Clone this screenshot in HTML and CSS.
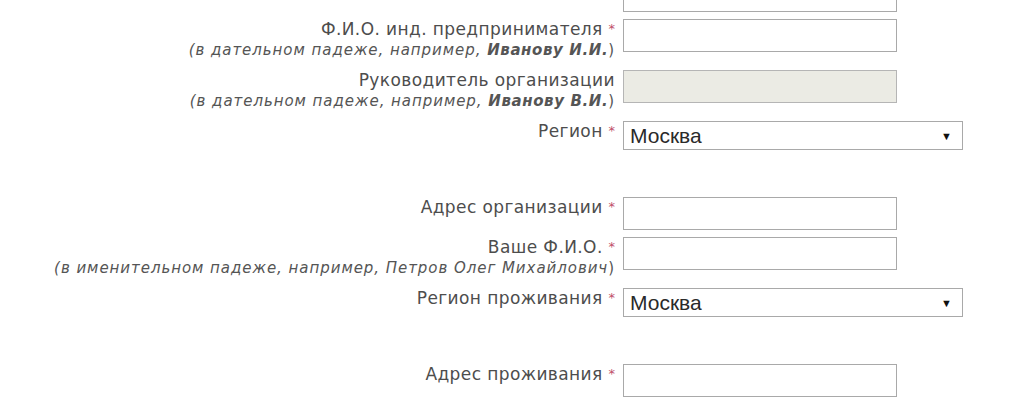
FILE: index.html
```html
<!DOCTYPE html>
<html lang="ru">
<head>
    <meta charset="UTF-8">
    <title>Анкета</title>
    <link rel="stylesheet" href="styles.css">
</head>
<body>
    <form class="form">
        <div class="row">
            <div class="label-col">
                <label>Наименование организации <span class="req">*</span></label>
            </div>
            <input type="text" class="field">
        </div>
        <div class="row">
            <div class="label-col">
                <label>Ф.И.О. инд. предпринимателя <span class="req">*</span></label>
                <div class="hint"><i>(в дательном падеже, например, <b>Иванову И.И.</b></i>)</div>
            </div>
            <input type="text" class="field">
        </div>
        <div class="row">
            <div class="label-col">
                <label>Руководитель организации</label>
                <div class="hint"><i>(в дательном падеже, например, <b>Иванову В.И.</b></i>)</div>
            </div>
            <input type="text" class="field" disabled>
        </div>
        <div class="row">
            <div class="label-col">
                <label>Регион <span class="req">*</span></label>
            </div>
            <div class="select">
                <span>Москва</span>
                <span class="arrow">&#9660;</span>
            </div>
        </div>
        <div class="spacer"></div>
        <div class="row">
            <div class="label-col">
                <label>Адрес организации <span class="req">*</span></label>
            </div>
            <input type="text" class="field">
        </div>
        <div class="row">
            <div class="label-col">
                <label>Ваше Ф.И.О. <span class="req">*</span></label>
                <div class="hint"><i>(в именительном падеже, например, Петров Олег Михайлович</i>)</div>
            </div>
            <input type="text" class="field">
        </div>
        <div class="row">
            <div class="label-col">
                <label>Регион проживания <span class="req">*</span></label>
            </div>
            <div class="select">
                <span>Москва</span>
                <span class="arrow">&#9660;</span>
            </div>
        </div>
        <div class="spacer"></div>
        <div class="row">
            <div class="label-col">
                <label>Адрес проживания <span class="req">*</span></label>
            </div>
            <input type="text" class="field">
        </div>
    </form>
</body>
</html>
```

FILE: styles.css
```css
body {
    margin: 0;
    padding: 0;
    background-color: #ffffff;
    font-family: 'DejaVu Sans', Verdana, sans-serif;
    color: #444444;
    overflow: hidden;
}

.form {
    margin-top: -21px;
}

.row {
    display: grid;
    grid-template-columns: 615px auto;
    column-gap: 8px;
    align-items: start;
    margin-bottom: 7px;
}

.label-col {
    text-align: right;
}

label {
    display: block;
    font-size: 17px;
    line-height: 20px;
    letter-spacing: 0.4px;
    color: #4d4d4d;
    white-space: nowrap;
}

.req {
    color: #c0506a;
    font-size: 13px;
    vertical-align: top;
    letter-spacing: 0;
}

.hint {
    margin-top: 2px;
    padding-bottom: 4px;
    font-size: 15px;
    line-height: 18px;
    letter-spacing: 0.95px;
    color: #555555;
    white-space: nowrap;
}

.hint b {
    font-weight: bold;
    letter-spacing: 0.6px;
}

.field {
    width: 274px;
    height: 33px;
    box-sizing: border-box;
    border: 1px solid #a9a9a9;
    background-color: #ffffff;
    margin: 0;
    padding: 4px;
    font-size: 14px;
}

.field:disabled {
    background-color: #ebebe4;
    border-color: #b5b5b5;
}

.select {
    display: flex;
    justify-content: space-between;
    align-items: center;
    width: 340px;
    height: 29px;
    box-sizing: border-box;
    border: 1px solid #a9a9a9;
    padding: 0 10px 0 6px;
    font-family: 'Liberation Sans', Arial, sans-serif;
    font-size: 21px;
    color: #2a2a2a;
}

.arrow {
    font-size: 11px;
    color: #111111;
}

.spacer {
    height: 40px;
}
```
